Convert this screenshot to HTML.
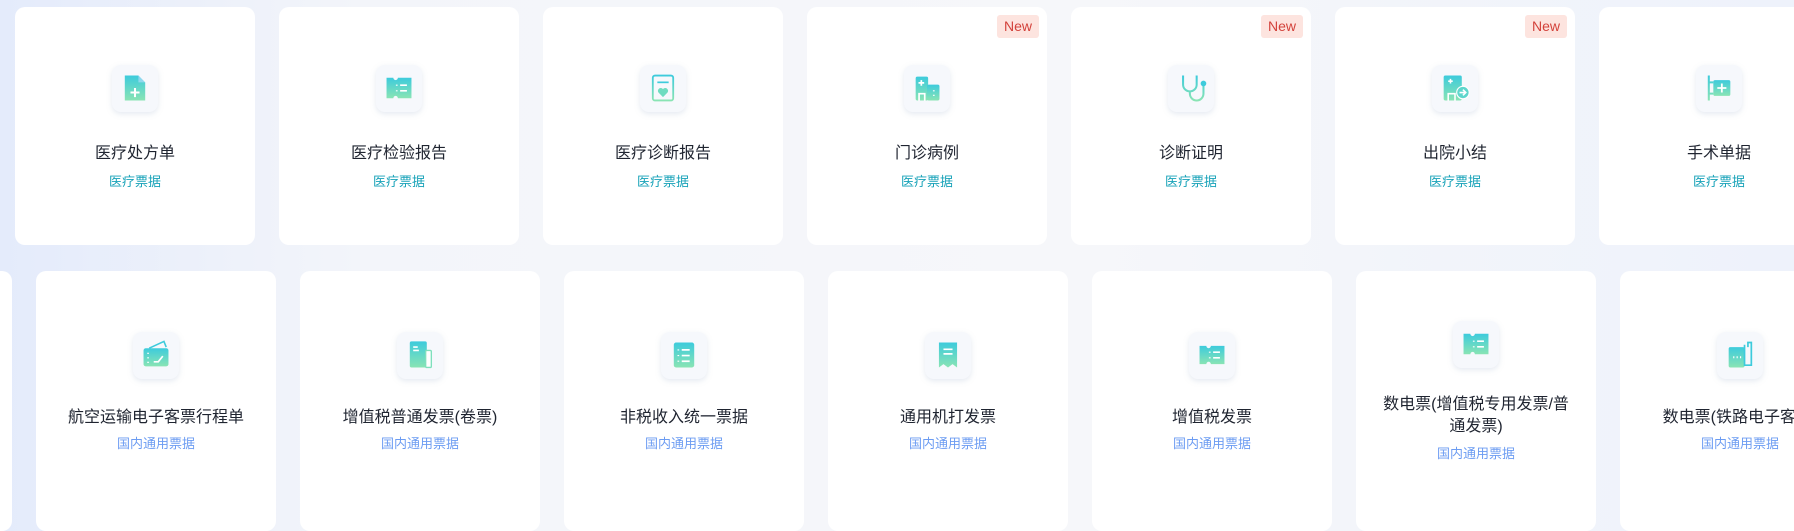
<!DOCTYPE html>
<html><head><meta charset="utf-8"><style>
*{margin:0;padding:0;box-sizing:border-box}
body{width:1794px;height:509px;overflow:hidden;position:relative;font-family:"Liberation Sans","Noto Sans CJK SC",sans-serif;background:linear-gradient(90deg,#e4ebfb 0%,#f3f5fa 20%,#f6f7fa 60%,#eef2fb 100%)}
.c{position:absolute;width:240px;background:#fff;border-radius:10px}
.r1{top:7px;height:238px}
.r2{top:271px;height:260px}
.ib{position:absolute;left:97px;width:46px;height:47px;border-radius:9px;background:#f6f8fc;box-shadow:0 2px 6px rgba(150,170,200,.25)}
.ib svg{position:absolute;left:6px;top:6px;width:34px;height:34px}
.t{position:absolute;left:10px;right:10px;text-align:center;font-size:16px;color:#1f2430;line-height:22px}
.s{position:absolute;left:0;right:0;text-align:center;font-size:13px;line-height:18px}
.r1 .ib{top:58px}.r1 .t{top:136px}.r1 .s{top:166px;color:#17a2b8}
.r2 .ib{top:61px}.r2 .t{top:136px}.r2 .s{top:164px;color:#6c9cf2}
.new{position:absolute;top:8px;right:8px;height:23px;padding:0 7px;border-radius:3px;background:#fde4df;color:#d3423b;font-size:14px;line-height:23px}
.wait{background:#e3e6ee;color:#888}
</style></head><body>
<svg width="0" height="0" style="position:absolute"><defs><linearGradient id="g" x1="0" y1="0" x2="0" y2="1"><stop offset="0" stop-color="#3dcbdc"/><stop offset="1" stop-color="#89e4b4"/></linearGradient></defs></svg>

<div class="c r1" style="left:15px"><div class="ib"><svg viewBox="0 0 30 30"><path d="M6 4h12l6 6v16H6z" fill="url(#g)"/><path d="M18 4v6h6" fill="#bdf" opacity=".6"/><path d="M15 15v8M11 19h8" stroke="#fff" stroke-width="1.8"/></svg></div><div class="t">医疗处方单</div><div class="s">医疗票据</div></div>
<div class="c r1" style="left:279px"><div class="ib"><svg viewBox="0 0 30 30"><path d="M4 6h22v18H4z" fill="url(#g)"/><circle cx="12" cy="6" r="2" fill="#f6f8fc"/><circle cx="12" cy="24" r="2" fill="#f6f8fc"/><path d="M13 12v1M13 17v1M16 12.5h6M16 17.5h6" stroke="#fff" stroke-width="1.5"/></svg></div><div class="t">医疗检验报告</div><div class="s">医疗票据</div></div>
<div class="c r1" style="left:543px"><div class="ib"><svg viewBox="0 0 30 30"><rect x="6" y="4" width="18" height="22" rx="2" fill="none" stroke="url(#g)" stroke-width="1.6"/><path d="M10 10h10" stroke="#3dcbdc" stroke-width="1.5"/><path d="M15 23l-4-4a2.2 2.2 0 0 1 4-3 2.2 2.2 0 0 1 4 3z" fill="#6fdcc0"/></svg></div><div class="t">医疗诊断报告</div><div class="s">医疗票据</div></div>
<div class="c r1" style="left:807px"><div class="new">New</div><div class="ib"><svg viewBox="0 0 30 30"><rect x="5" y="5" width="11" height="21" rx="1.5" fill="url(#g)"/><rect x="15" y="12" width="11" height="14" rx="1.5" fill="url(#g)"/><path d="M10 8v5M7.5 10.5h5M8 26v-6h5v6M21 17v1M21 21v1" stroke="#fff" stroke-width="1.5" fill="none"/></svg></div><div class="t">门诊病例</div><div class="s">医疗票据</div></div>
<div class="c r1" style="left:1071px"><div class="new">New</div><div class="ib"><svg viewBox="0 0 30 30"><path d="M8 4v8a6 6 0 0 0 12 0V4M14 18v2a6 6 0 0 0 12 0v-7" fill="none" stroke="url(#g)" stroke-width="1.8"/><circle cx="26" cy="11" r="2.5" fill="#3dcbdc"/></svg></div><div class="t">诊断证明</div><div class="s">医疗票据</div></div>
<div class="c r1" style="left:1335px"><div class="new">New</div><div class="ib"><svg viewBox="0 0 30 30"><rect x="5" y="4" width="16" height="22" rx="1.5" fill="url(#g)"/><circle cx="22" cy="19" r="5.5" fill="#5fd6cc" stroke="#fff" stroke-width="1"/><path d="M9 9h4M11 7v4M9 26v-6h6v6M19 19h5M22 16.5l2.5 2.5-2.5 2.5" stroke="#fff" stroke-width="1.4" fill="none"/></svg></div><div class="t">出院小结</div><div class="s">医疗票据</div></div>
<div class="c r1" style="left:1599px"><div class="new wait">待</div><div class="ib"><svg viewBox="0 0 30 30"><path d="M6 4v22M6 10h4M6 20h4" stroke="url(#g)" stroke-width="1.8"/><rect x="10" y="8" width="15" height="14" rx="1.5" fill="url(#g)"/><path d="M17.5 11v8M13.5 15h8" stroke="#fff" stroke-width="1.6"/></svg></div><div class="t">手术单据</div><div class="s">医疗票据</div></div>

<div class="c r2" style="left:-228px"></div>
<div class="c r2" style="left:36px"><div class="ib"><svg viewBox="0 0 30 30"><path d="M9 9l13-6 2 5" fill="none" stroke="#3dcbdc" stroke-width="1.4"/><rect x="4" y="9" width="22" height="16" rx="2" fill="url(#g)"/><path d="M8 13v1M8 17v1M8 21v1M13 21h4l4-5" stroke="#fff" stroke-width="1.5" fill="none"/></svg></div><div class="t">航空运输电子客票行程单</div><div class="s">国内通用票据</div></div>
<div class="c r2" style="left:300px"><div class="ib"><svg viewBox="0 0 30 30"><rect x="6" y="3" width="15" height="23" rx="1.5" fill="url(#g)"/><rect x="20" y="11" width="5" height="15" rx="1" fill="#fff" stroke="#7fe0bc" stroke-width="1.2"/><path d="M9 8h4M9 11h5" stroke="#fff" stroke-width="1.4"/></svg></div><div class="t">增值税普通发票(卷票)</div><div class="s">国内通用票据</div></div>
<div class="c r2" style="left:564px"><div class="ib"><svg viewBox="0 0 30 30"><rect x="6" y="4" width="18" height="22" rx="2" fill="url(#g)"/><path d="M10 10v1M10 15v1M10 20v1M13 10.5h7M13 15.5h7M13 20.5h7" stroke="#fff" stroke-width="1.5"/></svg></div><div class="t">非税收入统一票据</div><div class="s">国内通用票据</div></div>
<div class="c r2" style="left:828px"><div class="ib"><svg viewBox="0 0 30 30"><path d="M7 4h16v22l-4-3-4 3-4-3-4 3z" fill="url(#g)"/><path d="M11 10h8M11 14h8" stroke="#fff" stroke-width="1.5"/></svg></div><div class="t">通用机打发票</div><div class="s">国内通用票据</div></div>
<div class="c r2" style="left:1092px"><div class="ib"><svg viewBox="0 0 30 30"><path d="M4 7h22v16H4z" fill="url(#g)"/><circle cx="12" cy="7" r="2" fill="#f6f8fc"/><circle cx="12" cy="23" r="2" fill="#f6f8fc"/><path d="M13 12v1M13 17v1M16 12.5h6M16 17.5h6" stroke="#fff" stroke-width="1.5"/></svg></div><div class="t">增值税发票</div><div class="s">国内通用票据</div></div>
<div class="c r2" style="left:1356px"><div class="ib" style="top:50px"><svg viewBox="0 0 30 30"><path d="M4 6h22v18H4z" fill="url(#g)"/><circle cx="12" cy="6" r="2" fill="#f6f8fc"/><circle cx="12" cy="24" r="2" fill="#f6f8fc"/><path d="M13 12v1M13 17v1M16 12.5h6M16 17.5h6" stroke="#fff" stroke-width="1.5"/></svg></div><div class="t" style="top:123px;left:22px;right:22px">数电票(增值税专用发票/普通发票)</div><div class="s" style="top:174px">国内通用票据</div></div>
<div class="c r2" style="left:1620px"><div class="ib"><svg viewBox="0 0 30 30"><rect x="5" y="8" width="14" height="18" rx="1.5" fill="url(#g)"/><path d="M19 6v18h6V4h-3v4" fill="none" stroke="#3dcbdc" stroke-width="1.5"/><path d="M9 17h1M12 17h1M15 17h1" stroke="#fff" stroke-width="1.8"/></svg></div><div class="t" style="white-space:nowrap;left:-20px;right:auto;width:280px">数电票(铁路电子客票)</div><div class="s">国内通用票据</div></div>
</body></html>
